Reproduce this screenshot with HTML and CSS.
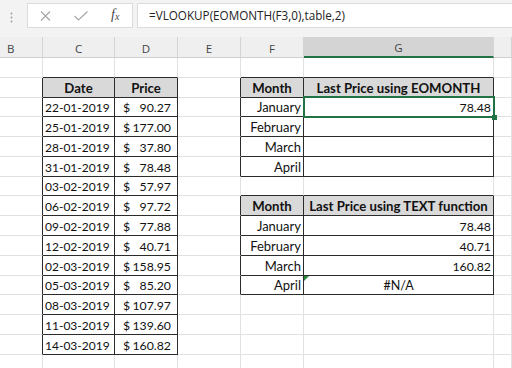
FILE: index.html
```html
<!DOCTYPE html>
<html lang="en">
<head>
    <meta charset="UTF-8">
    <meta name="viewport" content="width=device-width, initial-scale=1.0">
    <title>Last price of the month</title>
    <link rel="stylesheet" href="styles.css">
</head>
<body>
    <!-- Formula bar -->
    <div class="formula-bar">
        <div class="grip">
            <svg width="3" height="11" viewBox="0 0 3 11"><circle cx="1.5" cy="1.5" r="0.9"/><circle cx="1.5" cy="5.5" r="0.9"/><circle cx="1.5" cy="9.5" r="0.9"/></svg>
        </div>
        <div class="fx-tools">
            <svg class="icon-cancel" width="11" height="10" viewBox="0 0 11 10"><path d="M1 0.5 L10 9.5 M10 0.5 L1 9.5"/></svg>
            <svg class="icon-enter" width="14" height="10" viewBox="0 0 14 10"><path d="M0.5 5 L4.5 9 L13.5 0.5"/></svg>
            <span class="fx"><i>f</i><i class="fx-x">x</i></span>
        </div>
        <div class="formula">=VLOOKUP(EOMONTH(F3,0),table,2)</div>
    </div>

    <!-- Worksheet -->
    <table class="sheet">
        <colgroup>
            <col class="col-b">
            <col class="col-c">
            <col class="col-d">
            <col class="col-e">
            <col class="col-f">
            <col class="col-g">
            <col class="col-h">
        </colgroup>
        <thead>
            <tr>
                <th class="first">B</th><th>C</th><th>D</th><th>E</th><th>F</th><th class="active">G</th><th></th>
            </tr>
        </thead>
        <tbody>
            <tr>
                <td></td><td class="edge-b"></td><td class="edge-b"></td><td></td><td class="edge-b"></td><td class="edge-b"></td><td></td>
            </tr>
            <tr>
                <td class="edge-r"></td>
                <td class="box head">Date</td>
                <td class="box head">Price</td>
                <td class="edge-r"></td>
                <td class="box head">Month</td>
                <td class="box head">Last Price using EOMONTH</td>
                <td></td>
            </tr>
            <tr>
                <td class="edge-r"></td>
                <td class="box date">22-01-2019</td>
                <td class="box"><div class="acct"><span>$</span><span>90.27</span></div></td>
                <td class="edge-r"></td>
                <td class="box month">January</td>
                <td class="box num selected">78.48</td>
                <td></td>
            </tr>
            <tr>
                <td class="edge-r"></td>
                <td class="box date">25-01-2019</td>
                <td class="box"><div class="acct"><span>$</span><span>177.00</span></div></td>
                <td class="edge-r"></td>
                <td class="box month">February</td>
                <td class="box num"></td>
                <td></td>
            </tr>
            <tr>
                <td class="edge-r"></td>
                <td class="box date">28-01-2019</td>
                <td class="box"><div class="acct"><span>$</span><span>37.80</span></div></td>
                <td class="edge-r"></td>
                <td class="box month">March</td>
                <td class="box num"></td>
                <td></td>
            </tr>
            <tr>
                <td class="edge-r"></td>
                <td class="box date">31-01-2019</td>
                <td class="box"><div class="acct"><span>$</span><span>78.48</span></div></td>
                <td class="edge-r"></td>
                <td class="box month">April</td>
                <td class="box num"></td>
                <td></td>
            </tr>
            <tr>
                <td class="edge-r"></td>
                <td class="box date">03-02-2019</td>
                <td class="box"><div class="acct"><span>$</span><span>57.97</span></div></td>
                <td></td>
                <td class="edge-b"></td>
                <td class="edge-b"></td>
                <td></td>
            </tr>
            <tr>
                <td class="edge-r"></td>
                <td class="box date">06-02-2019</td>
                <td class="box"><div class="acct"><span>$</span><span>97.72</span></div></td>
                <td class="edge-r"></td>
                <td class="box head">Month</td>
                <td class="box head">Last Price using TEXT function</td>
                <td></td>
            </tr>
            <tr>
                <td class="edge-r"></td>
                <td class="box date">09-02-2019</td>
                <td class="box"><div class="acct"><span>$</span><span>77.88</span></div></td>
                <td class="edge-r"></td>
                <td class="box month">January</td>
                <td class="box num">78.48</td>
                <td></td>
            </tr>
            <tr>
                <td class="edge-r"></td>
                <td class="box date">12-02-2019</td>
                <td class="box"><div class="acct"><span>$</span><span>40.71</span></div></td>
                <td class="edge-r"></td>
                <td class="box month">February</td>
                <td class="box num">40.71</td>
                <td></td>
            </tr>
            <tr>
                <td class="edge-r"></td>
                <td class="box date">02-03-2019</td>
                <td class="box"><div class="acct"><span>$</span><span>158.95</span></div></td>
                <td class="edge-r"></td>
                <td class="box month">March</td>
                <td class="box num">160.82</td>
                <td></td>
            </tr>
            <tr>
                <td class="edge-r"></td>
                <td class="box date">05-03-2019</td>
                <td class="box"><div class="acct"><span>$</span><span>85.20</span></div></td>
                <td class="edge-r"></td>
                <td class="box month">April</td>
                <td class="box center error">#N/A</td>
                <td></td>
            </tr>
            <tr>
                <td class="edge-r"></td>
                <td class="box date">08-03-2019</td>
                <td class="box"><div class="acct"><span>$</span><span>107.97</span></div></td>
                <td></td><td></td><td></td><td></td>
            </tr>
            <tr>
                <td class="edge-r"></td>
                <td class="box date">11-03-2019</td>
                <td class="box"><div class="acct"><span>$</span><span>139.60</span></div></td>
                <td></td><td></td><td></td><td></td>
            </tr>
            <tr>
                <td class="edge-r"></td>
                <td class="box date">14-03-2019</td>
                <td class="box"><div class="acct"><span>$</span><span>160.82</span></div></td>
                <td></td><td></td><td></td><td></td>
            </tr>
            <tr>
                <td></td><td></td><td></td><td></td><td></td><td></td><td></td>
            </tr>
        </tbody>
    </table>
</body>
</html>
```

FILE: styles.css
```css
body {
    margin: 0;
    width: 512px;
    height: 368px;
    overflow: hidden;
    background-color: #ffffff;
    font-family: Lato, "Open Sans", sans-serif;
    color: #111111;
}

/* Formula bar */
.formula-bar {
    display: flex;
    align-items: flex-start;
    height: 37px;
    padding-top: 3px;
    box-sizing: border-box;
    background-color: #f3f3f3;
}
.grip {
    width: 27px;
    padding: 9px 0 0 10px;
    box-sizing: border-box;
}
.grip svg {
    display: block;
    fill: #9a9a9a;
}
.fx-tools {
    display: flex;
    align-items: center;
    width: 106px;
    height: 25px;
    box-sizing: border-box;
    padding-left: 12px;
    background-color: #ffffff;
    border: 1px solid #dcdcdc;
}
.fx-tools svg {
    display: block;
    fill: none;
    stroke: #a8a8a8;
    stroke-width: 1.2;
}
.icon-enter {
    margin-left: 23px;
}
.fx {
    margin-left: 23px;
    font-family: "Liberation Serif", serif;
    font-size: 14px;
    color: #4a4a4a;
    line-height: 14px;
}
.fx-x {
    font-size: 10px;
    position: relative;
    top: 1px;
}
.formula {
    flex: 1;
    height: 25px;
    margin-left: 4px;
    padding-left: 11px;
    box-sizing: border-box;
    background-color: #ffffff;
    border: 1px solid #dcdcdc;
    border-right: none;
    font-family: "Open Sans", sans-serif;
    font-size: 11.7px;
    line-height: 23px;
    color: #222222;
    white-space: nowrap;
}

/* Worksheet grid */
.sheet {
    border-collapse: separate;
    border-spacing: 0;
    table-layout: fixed;
    width: 512px;
}
.col-b { width: 43px; }
.col-c { width: 72px; }
.col-d { width: 63px; }
.col-e { width: 63px; }
.col-f { width: 63px; }
.col-g { width: 190px; }
.col-h { width: 18px; }

.sheet thead tr {
    height: 21px;
}
.sheet th {
    padding: 2px 0 0;
    background-color: #efefef;
    border-right: 1px solid #d4d4d4;
    border-bottom: 1px solid #cfcfcf;
    font-family: "Open Sans", sans-serif;
    font-size: 11.5px;
    font-weight: normal;
    color: #444444;
    text-align: center;
}
.sheet th.first {
    text-align: left;
    padding-left: 7px;
}
.sheet th.active {
    background-color: #d4d4d4;
    border-bottom: 2px solid #217346;
}
.sheet tbody tr {
    height: 19.79px;
}
.sheet td {
    padding: 0 2px 1px;
    border-right: 1px solid #e1e1e1;
    border-bottom: 1px solid #e1e1e1;
    font-size: 12.3px;
    line-height: 15px;
    vertical-align: bottom;
    white-space: nowrap;
    overflow: hidden;
}

/* Bordered table cells */
.sheet td.edge-r { border-right-color: #2b2b2b; }
.sheet td.edge-b { border-bottom-color: #2b2b2b; }
.sheet td.box {
    border-right-color: #2b2b2b;
    border-bottom-color: #2b2b2b;
}
.sheet td.head {
    background-color: #d9d9d9;
    font-size: 13.2px;
    font-weight: bold;
    text-align: center;
}
.sheet td.month {
    font-size: 13px;
    text-align: right;
}
.sheet td.num { text-align: right; }
.sheet td.center {
    font-size: 12.5px;
    text-align: center;
}
.sheet td.date {
    font-size: 12px;
    text-align: right;
    padding-right: 5px;
}
.acct {
    display: flex;
    justify-content: space-between;
    padding: 0 4px 0 6px;
}

/* Active cell */
.sheet td.selected {
    position: relative;
    overflow: visible;
}
.sheet td.selected::after {
    content: "";
    position: absolute;
    top: -2px;
    right: -2px;
    bottom: -2px;
    left: -1px;
    border: 2px solid #217346;
}
.sheet td.selected::before {
    content: "";
    position: absolute;
    right: -4px;
    bottom: -4px;
    width: 5px;
    height: 5px;
    background-color: #217346;
    z-index: 1;
}

/* Error indicator */
.sheet td.error {
    position: relative;
}
.sheet td.error::before {
    content: "";
    position: absolute;
    top: 0;
    left: 0;
    border-top: 5px solid #2a8a3e;
    border-right: 5px solid transparent;
}
```
